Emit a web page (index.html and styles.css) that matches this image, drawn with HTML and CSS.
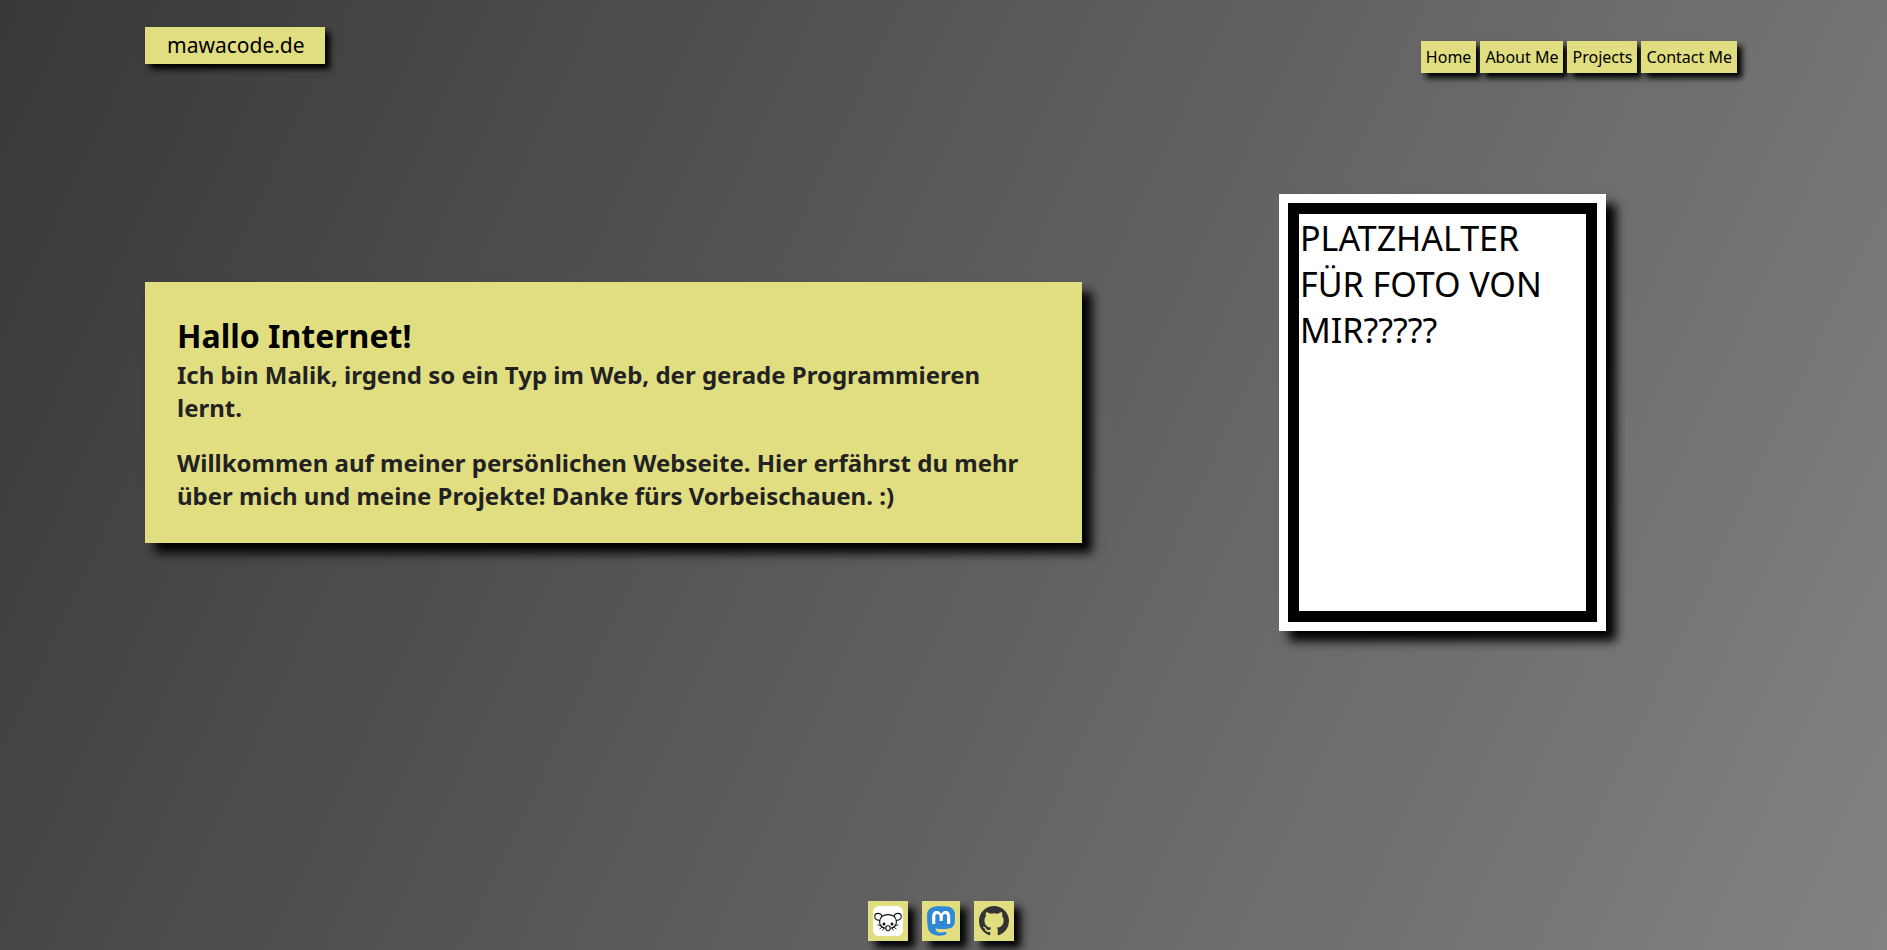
FILE: index.html
```html
<!DOCTYPE html>
<html lang="de">
<head>
  <meta charset="utf-8">
  <meta name="viewport" content="width=device-width, initial-scale=1">
  <title>mawacode.de</title>
  <link rel="stylesheet" href="styles.css">
</head>
<body>
  <header class="site-header">
    <a class="brand" href="#home">mawacode.de</a>
    <nav class="site-nav" aria-label="Navigation">
      <a class="nav-link" href="#home">Home</a>
      <a class="nav-link" href="#about">About Me</a>
      <a class="nav-link" href="#projects">Projects</a>
      <a class="nav-link" href="#contact">Contact Me</a>
    </nav>
  </header>

  <main class="hero" id="home">
    <section class="intro">
      <h1 class="intro-title">Hallo Internet!</h1>
      <p class="intro-text">Ich bin Malik, irgend so ein Typ im Web, der gerade Programmieren lernt.</p>
      <p class="intro-text">Willkommen auf meiner persönlichen Webseite. Hier erfährst du mehr über mich und meine Projekte! Danke fürs Vorbeischauen. :)</p>
    </section>
    <div class="photo">
      <p class="photo-text">PLATZHALTER FÜR FOTO VON MIR?????</p>
    </div>
  </main>

  <footer class="site-footer">
    <a class="social" href="#lemmy" aria-label="Lemmy">
      <svg width="30" height="30" viewBox="0 0 30 30" aria-hidden="true">
        <rect width="30" height="30" rx="6" fill="#fff"/>
        <g fill="none" stroke="#111" stroke-width="1.1" stroke-linecap="round">
          <path d="M6.600 14.300C4.500 14.500 1.700 13.400 1.700 10.700 1.700 8.700 3.200 7.400 5 7.400c1.900 0 3.300 1 4 2.600"/>
          <path d="M23.400 14.300c2.100.2 4.900-.9 4.900-3.600 0-2-1.500-3.300-3.300-3.300-1.900 0-3.300 1-4 2.600"/>
          <path d="M11.700 22.100C8.800 21.300 6.600 18.900 6.600 15.700c0-4.400 3.300-7.100 8.400-7.100s8.400 2.700 8.400 7.100c0 3.200-2.200 5.600-5.100 6.400"/>
          <path d="M12.700 21.800c0-1.300 1-2.100 2.300-2.100s2.300.8 2.300 2.100c0 1.500-.9 2.900-2.300 2.900s-2.300-1.400-2.300-2.900z"/>
          <path d="M8.400 19.800l-3.400-.9M9.200 21l-2.300 1.800M10.700 22l-.8 2M21.600 19.800l3.400-.9M20.800 21l2.300 1.800M19.300 22l.8 2" stroke-width="0.900"/>
        </g>
        <circle cx="11" cy="18" r="1.500" fill="#111"/>
        <circle cx="19" cy="18" r="1.500" fill="#111"/>
      </svg>
    </a>
    <a class="social" href="#mastodon" aria-label="Mastodon">
      <svg width="28" height="30" viewBox="0.6 0 22.800 24" aria-hidden="true">
        <path fill="#fff" d="M4 3h16v12H4z"/>
        <path fill="#3088d4" d="M23.268 5.313c-.35-2.578-2.617-4.610-5.304-5.004C17.510.242 15.792 0 11.813 0h-.03c-3.980 0-4.835.242-5.288.309C3.882.692 1.496 2.518.917 5.127.640 6.412.610 7.837.661 9.143c.074 1.874.088 3.745.260 5.611.118 1.240.325 2.470.620 3.680.550 2.237 2.777 4.098 4.960 4.857 2.336.792 4.849.923 7.256.380.265-.061.527-.132.786-.213.585-.184 1.270-.390 1.774-.753a.057.057 0 0 0 .023-.043v-1.809a.052.052 0 0 0-.020-.041.053.053 0 0 0-.046-.010 20.282 20.282 0 0 1-4.709.545c-2.730 0-3.463-1.284-3.674-1.818a5.593 5.593 0 0 1-.319-1.433.053.053 0 0 1 .066-.054c1.517.363 3.072.546 4.632.546.376 0 .750 0 1.125-.010 1.570-.044 3.224-.124 4.768-.422.038-.008.077-.015.110-.024 2.435-.464 4.753-1.920 4.989-5.604.008-.145.030-1.520.030-1.670.002-.512.167-3.630-.024-5.545zm-3.748 9.195h-2.561V8.290c0-1.309-.550-1.976-1.670-1.976-1.230 0-1.846.790-1.846 2.350v3.403h-2.546V8.663c0-1.560-.617-2.350-1.848-2.350-1.112 0-1.668.668-1.670 1.977v6.218H4.822V8.102c0-1.310.337-2.350 1.011-3.120.696-.770 1.608-1.164 2.740-1.164 1.311 0 2.302.5 2.962 1.498l.638 1.060.638-1.060c.660-.999 1.650-1.498 2.960-1.498 1.130 0 2.043.395 2.740 1.164.675.770 1.012 1.810 1.012 3.120z"/>
      </svg>
    </a>
    <a class="social" href="#github" aria-label="GitHub">
      <svg width="30" height="30" viewBox="0 0 16 16" aria-hidden="true">
        <path fill="#333" d="M8 0C3.580 0 0 3.580 0 8c0 3.540 2.290 6.530 5.470 7.590.4.070.550-.170.550-.380 0-.190-.010-.820-.010-1.490-2.010.370-2.530-.490-2.690-.940-.090-.230-.480-.940-.820-1.130-.280-.150-.680-.520-.010-.530.630-.010 1.080.580 1.230.820.720 1.210 1.870.870 2.330.660.070-.520.280-.870.510-1.070-1.780-.200-3.640-.890-3.640-3.950 0-.870.310-1.590.820-2.150-.080-.200-.360-1.020.080-2.120 0 0 .670-.210 2.200.820.640-.180 1.320-.270 2-.270s1.360.090 2 .270c1.530-1.040 2.200-.820 2.200-.820.440 1.100.160 1.920.080 2.120.510.560.820 1.270.820 2.150 0 3.070-1.870 3.750-3.650 3.950.290.250.540.730.540 1.480 0 1.070-.010 1.930-.010 2.200 0 .210.150.460.550.380A8.010 8.010 0 0 0 16 8c0-4.420-3.580-8-8-8z"/>
      </svg>
    </a>
  </footer>
</body>
</html>
```
FILE: styles.css
```css
* {
  box-sizing: border-box;
  margin: 0;
}

body {
  display: flex;
  flex-direction: column;
  min-height: 100vh;
  padding: 27px 150px 9px 145px;
  background: linear-gradient(115deg, #383838, #828282);
  color: #000;
  font-family: "Noto Sans", sans-serif;
  font-size: 16px;
  line-height: 22px;
}

a {
  color: inherit;
  text-decoration: none;
}

.site-header {
  display: flex;
  flex-wrap: wrap;
  justify-content: space-between;
  gap: 16px;
}

.brand {
  align-self: flex-start;
  padding: 4px 20px 4px 22px;
  background: #e1de82;
  box-shadow: 5px 5px 6px #000;
  font-size: 21px;
  line-height: 29px;
}

.site-nav {
  display: flex;
  gap: 4px;
  padding-top: 14px;
}

.nav-link {
  padding: 5px;
  background: #e1de82;
  box-shadow: 5px 5px 6px #000;
}

.hero {
  display: grid;
  grid-template-columns: 35fr 22fr;
  align-items: center;
  gap: 66px;
  margin: 121px 0 64px;
}

.intro {
  padding: 32px 32px 31px;
  background: #e1de82;
  box-shadow: 10px 10px 10px #000;
}

.intro-title {
  font-size: 32px;
  line-height: 44px;
}

.intro-text {
  color: #222;
  font-size: 24px;
  font-weight: 700;
  line-height: 33px;
}

.intro-text + .intro-text {
  margin-top: 22px;
}

.photo {
  justify-self: center;
  width: 327px;
  padding: 9px;
  background: #fff;
  box-shadow: 10px 10px 10px #000;
}

.photo-text {
  min-height: 419px;
  padding: 1px;
  border: 11px solid #000;
  font-size: 34px;
  line-height: 46px;
}

.site-footer {
  display: flex;
  justify-content: center;
  gap: 14px;
  margin-top: auto;
}

.social {
  display: flex;
  padding: 5px;
  background: #e1de82;
  box-shadow: 7px 7px 8px #000;
}
```
